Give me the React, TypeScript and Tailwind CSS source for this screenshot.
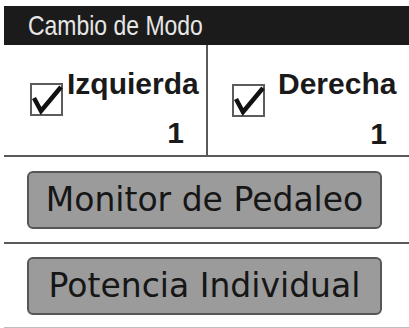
import React from "react";

const CheckBox = () => (
  <svg width="33" height="33" viewBox="0 0 33 33" className="shrink-0">
    <rect x="1" y="1" width="31" height="31" fill="#fff" stroke="#5c5c5c" strokeWidth="2" />
    <polyline
      points="4,15 11,28 31,4"
      fill="none"
      stroke="#111"
      strokeWidth="4.5"
      strokeLinejoin="miter"
    />
  </svg>
);

export default function App() {
  const sans = { fontFamily: "'Liberation Sans', Arial, sans-serif" };
  const btn = { fontFamily: "'DejaVu Sans', Verdana, sans-serif" };

  return (
    <div className="w-[409px] h-[328px] bg-white overflow-hidden pl-1 pt-1.5">
      <div className="h-[39px] bg-[#1b1b1b] pl-6 text-[28px] leading-[39px] text-[#e6e6e6] whitespace-nowrap" style={sans}>
        <span className="inline-block origin-left scale-x-[0.82]">Cambio de Modo</span>
      </div>

      <div className="flex border-b-2 border-[#595959]" style={sans}>
        <div className="w-[202px] shrink-0 h-[110px] pt-6 flex flex-col">
          <div className="flex items-start pl-[26px] whitespace-nowrap">
            <div className="mt-[14px] shrink-0">
              <CheckBox />
            </div>
            <span className="ml-1 text-[30px] leading-[30px] font-bold text-[#1a1a1a]">Izquierda</span>
          </div>
          <div className="mt-[2px] pr-[22px] text-right text-[30px] leading-[30px] font-bold text-[#1a1a1a]">1</div>
        </div>
        <div className="w-[2px] shrink-0 bg-[#595959]" />
        <div className="w-[201px] shrink-0 h-[110px] pt-6 flex flex-col">
          <div className="flex items-start pl-6 whitespace-nowrap">
            <div className="mt-[15px] shrink-0">
              <CheckBox />
            </div>
            <span className="ml-[13px] text-[30px] leading-[30px] font-bold text-[#1a1a1a]">Derecha</span>
          </div>
          <div className="mt-[2px] pr-[22px] text-right text-[30px] leading-[30px] font-bold text-[#1a1a1a]">1</div>
        </div>
      </div>

      <div className="pt-[14px] pb-[13px] pl-[23px] border-b-2 border-[#595959]">
        <div
          className="w-[355px] h-[58px] rounded-[6px] border-2 border-[#565656] bg-[#9b9b9b] flex items-center justify-center text-[33px] text-[#161616]"
          style={btn}
        >
          Monitor de Pedaleo
        </div>
      </div>

      <div className="pt-[13px] pb-[12px] pl-[23px] border-b-2 border-[#bdbdbd]">
        <div
          className="w-[355px] h-[58px] rounded-[6px] border-2 border-[#565656] bg-[#9b9b9b] flex items-center justify-center text-[33px] text-[#161616]"
          style={btn}
        >
          Potencia Individual
        </div>
      </div>
    </div>
  );
}
